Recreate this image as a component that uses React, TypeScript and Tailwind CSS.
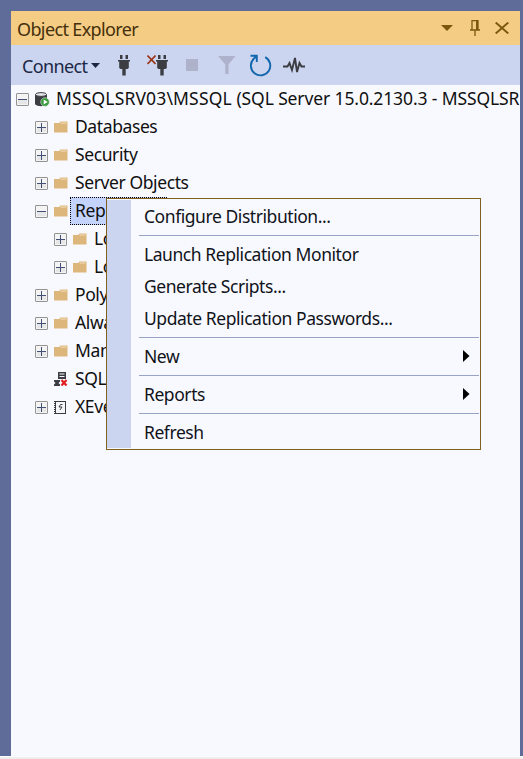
import type { ReactNode } from 'react';

function Plug() {
  return (
    <svg width="12" height="21" viewBox="0 0 12 21" fill="#3b3d42">
      <path d="M2 0h2.500v4H2zM7.500 0H10v4H7.500zM0 5h12v1.600H0zM1.200 6.500h9.600V13L9.500 14H7.700V20.500H4.300V14H2.500L1.200 13z" />
    </svg>
  );
}

function Toolbar() {
  return (
    <div className="flex h-10 items-center bg-[#ccd5f0] pl-[11px] text-[#1b2745]">
      <span className="w-[66px] whitespace-nowrap pt-px text-[18px] tracking-[-0.65px]">Connect</span>
      <svg className="ml-[3px]" width="9" height="5" viewBox="0 0 9 5" fill="#1b2745">
        <path d="M0 0h9L4.500 5z" />
      </svg>
      <span className="ml-[18px]"><Plug /></span>
      <span className="ml-[17px] flex w-[22px]">
        <svg width="9" height="10" viewBox="0 0 9 10" stroke="#9c3418" strokeWidth="1.600">
          <path d="M.5.5l8 8.500M8.500.5l-8 8.500" />
        </svg>
        <Plug />
      </span>
      <span className="ml-[17px] size-3 bg-[#aeb2ca]" />
      <svg className="ml-5" width="18" height="18" viewBox="0 0 18 18" fill="#aeb2ca">
        <path d="M0 0h17.500l-7 8.500V18H7.300V8.500z" />
      </svg>
      <svg className="ml-[13px]" width="23" height="23" viewBox="0 0 23 23" fill="none" stroke="#1267ad" strokeWidth="1.900">
        <path d="M16.200 3.100A9.700 9.700 0 1 1 4.500 5L7.500 2M1.500 1.700h6.300v6.300" />
      </svg>
      <svg className="ml-[11px]" width="22" height="18" viewBox="0 0 22 18" fill="none" stroke="#3b3d42" strokeWidth="1.900">
        <path d="M0 10.500h4.500L6.500 7l2.500 7L12 2l2 14 2.500-9L18.500 10.500H22" />
      </svg>
    </div>
  );
}

function Expander({ open }: { open?: boolean }) {
  return (
    <svg className="shrink-0" width="13" height="13" viewBox="0 0 13 13">
      <rect x=".5" y=".5" width="12" height="12" rx=".5" fill="#f4f4f4" stroke="#949494" />
      <path d="M2 7h9v4H2z" fill="#e6e6e6" />
      <path d={open ? 'M2 6.500h9' : 'M2 6.500h9M6.500 2v9'} stroke="#425078" />
    </svg>
  );
}

function Folder() {
  return (
    <svg width="14" height="12" viewBox="0 0 14 12">
      <path d="M0 2h5l1.500-1.500H13.500V11.500H0z" fill="#dcb67a" />
      <path d="M6.500 2h6" stroke="#f2dfbf" />
    </svg>
  );
}

function Database() {
  return (
    <svg width="15" height="15" viewBox="0 0 15 15">
      <path d="M0 2.500v9C0 15 12 15 12 11.500v-9z" fill="#3b3d42" />
      <ellipse cx="6" cy="2.500" rx="5.500" ry="1.900" fill="#e3e5ea" stroke="#3b3d42" />
      <circle cx="10" cy="10" r="4.300" fill="#3a9b3c" stroke="#d7e9dc" strokeWidth=".6" />
      <path d="M8.700 7.500v5l4-2.500z" fill="#fff" />
    </svg>
  );
}

function Agent() {
  return (
    <svg width="14" height="14" viewBox="0 0 14 14">
      <path d="M4 0h8v7H4z" fill="#3b3d42" />
      <path d="M5.500 2h5M5.500 4.500h5" stroke="#f7f9fe" />
      <path d="M0 8h6v1.500L4.500 11 6 12.500V14H0v-1.500L1.500 11 0 9.500z" fill="#3b3d42" />
      <path d="M7.500 8l5 5.500M12.500 8l-5 5.500" stroke="#e02020" strokeWidth="2.200" />
    </svg>
  );
}

function Profiler() {
  return (
    <svg width="12" height="13" viewBox="0 0 12 13">
      <rect x="1.500" y=".5" width="10" height="12" fill="#f4f5f8" stroke="#3b3d42" />
      <path d="M.5 0v13" stroke="#3b3d42" strokeWidth="1.500" strokeDasharray="1 1" />
      <path d="M8.500 3.500H6.500L5 6H8L6 9" fill="none" stroke="#3b3d42" />
    </svg>
  );
}

function TreeRow({ label, level = 1, open, leaf, selected, icon }: {
  label: string; level?: number; open?: boolean; leaf?: boolean; selected?: boolean; icon?: ReactNode;
}) {
  return (
    <div className={`flex h-7 items-center ${level === 2 ? 'pl-[43px]' : 'pl-6'}`}>
      <span className="w-[13px] shrink-0">{!leaf && <Expander open={open} />}</span>
      <span className="ml-1.5 flex w-4 shrink-0">{icon ?? <Folder />}</span>
      <span className={`flex h-7 items-center border border-dotted px-1 pb-0.5 whitespace-nowrap ${selected ? 'w-[97px] border-black bg-[#c3d3fb]' : 'border-transparent'}`}>
        {label}
      </span>
    </div>
  );
}

function MenuItem({ label, submenu }: { label: string; submenu?: boolean }) {
  return (
    <div className="flex h-8 items-center justify-between whitespace-nowrap pl-[13px] pr-[9px]">
      <span className="pb-px">{label}</span>
      {submenu && (
        <svg width="7" height="12" viewBox="0 0 7 12"><path d="M0 0l6.500 6L0 12z" /></svg>
      )}
    </div>
  );
}

function Separator() {
  return <div className="ml-2 flex h-1.5 items-center pt-px"><div className="h-px w-full bg-[#98a3c6]" /></div>;
}

function ContextMenu() {
  return (
    <div className="absolute left-[106px] top-[198px] flex h-[252px] w-[375px] border border-[#806020] bg-[#f8f9fe] py-px tracking-[-0.44px] text-[#10131a]">
      <div className="w-6 bg-[#ccd5f0]" />
      <div className="flex-1 pr-px">
        <MenuItem label="Configure Distribution..." />
        <Separator />
        <MenuItem label="Launch Replication Monitor" />
        <MenuItem label="Generate Scripts..." />
        <MenuItem label="Update Replication Passwords..." />
        <Separator />
        <MenuItem label="New" submenu />
        <Separator />
        <MenuItem label="Reports" submenu />
        <Separator />
        <MenuItem label="Refresh" />
      </div>
    </div>
  );
}

export default function App() {
  return (
    <div className="relative flex h-[759px] w-[523px] flex-col overflow-hidden bg-[#eeeeee] font-['Noto_Sans',sans-serif] text-[17.5px] leading-6 text-[#101010]">
      <div className="flex h-[757px] flex-col border-b border-white bg-[#5f6c99] pl-[11px] pr-[3px] pt-[11px]">
        <header className="flex h-[34px] items-center bg-[#f4cc84] pl-1.5 text-[#44300c]">
          <span className="flex-1 pt-px text-[18px] tracking-[-0.63px]">Object Explorer</span>
          <svg width="12" height="6" viewBox="0 0 12 6" fill="#7b5710"><path d="M0 0h12L6 6z" /></svg>
          <svg className="ml-[17px]" width="10" height="16" viewBox="0 0 10 16" fill="none" stroke="#7b5710" strokeWidth="1.300">
            <path d="M2 9.500V.7h6v9M0 10h10M5 10v6" /><path d="M7 1v9" strokeWidth="2" />
          </svg>
          <svg className="ml-[15px] mr-[11px]" width="14" height="12" viewBox="0 0 14 12" stroke="#7b5710" strokeWidth="1.900">
            <path d="M.7.5l12.600 11M13.300.5L.7 11.500" />
          </svg>
        </header>
        <Toolbar />
        <main className="flex-1 overflow-hidden bg-[#f8f9fe] tracking-[-0.4px]">
          <div className="flex h-7 items-center pl-[5px]">
            <Expander open />
            <span className="ml-1.5 mr-1.5 shrink-0"><Database /></span>
            <span className="whitespace-pre pb-0.5">
              <span className="tracking-[0.15px]">{'MSSQLSRV03\\MSSQL '}</span>
              <span className="tracking-[-0.12px]">(SQL Server 15.0.2130.3 - MSSQLSR</span>
            </span>
          </div>
          <TreeRow label="Databases" />
          <TreeRow label="Security" />
          <TreeRow label="Server Objects" />
          <TreeRow label="Rep" open selected />
          <TreeRow label="Lo" level={2} />
          <TreeRow label="Lo" level={2} />
          <TreeRow label="Poly" />
          <TreeRow label="Alwa" />
          <TreeRow label="Man" />
          <TreeRow label="SQL" leaf icon={<Agent />} />
          <TreeRow label="XEve" icon={<Profiler />} />
        </main>
      </div>
      <ContextMenu />
    </div>
  );
}
